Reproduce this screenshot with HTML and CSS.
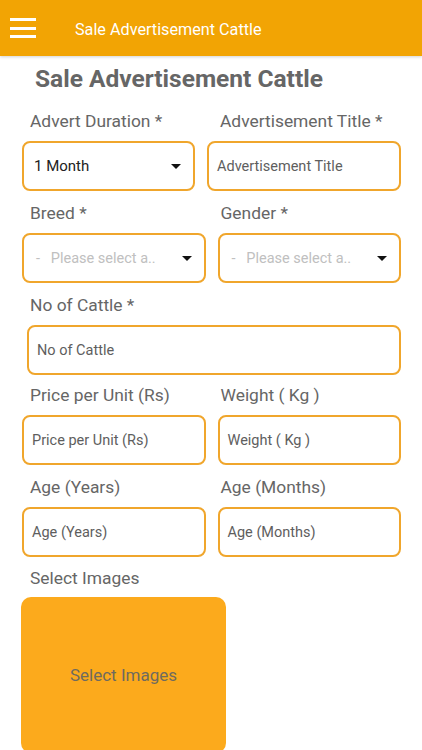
FILE: index.html
```html
<!DOCTYPE html>
<html>
<head>
<meta charset="utf-8">
<link rel="stylesheet" href="styles.css">
</head>
<body>
<header class="appbar">
  <span class="menu"><i></i><i></i><i></i></span>
  <span class="appbar-title">Sale Advertisement Cattle</span>
</header>
<main class="form">
  <h1 class="heading">Sale Advertisement Cattle</h1>

  <div class="row row-first">
    <div class="field">
      <label class="lbl">Advert Duration *</label>
      <div class="box select"><span class="value">1 Month</span><span class="caret"></span></div>
    </div>
    <div class="field">
      <label class="lbl lbl-r1">Advertisement Title *</label>
      <div class="box"><span class="ph">Advertisement Title</span></div>
    </div>
  </div>

  <div class="row">
    <div class="field">
      <label class="lbl">Breed *</label>
      <div class="box select"><span class="hint">-&nbsp;&nbsp; Please select a..</span><span class="caret"></span></div>
    </div>
    <div class="field">
      <label class="lbl lbl-r">Gender *</label>
      <div class="box select"><span class="hint">-&nbsp;&nbsp; Please select a..</span><span class="caret"></span></div>
    </div>
  </div>

  <div class="row row-full">
    <div class="field">
      <label class="lbl lbl-full">No of Cattle *</label>
      <div class="box"><span class="ph">No of Cattle</span></div>
    </div>
  </div>

  <div class="row">
    <div class="field">
      <label class="lbl">Price per Unit (Rs)</label>
      <div class="box"><span class="ph">Price per Unit (Rs)</span></div>
    </div>
    <div class="field">
      <label class="lbl lbl-r">Weight ( Kg )</label>
      <div class="box"><span class="ph">Weight ( Kg )</span></div>
    </div>
  </div>

  <div class="row">
    <div class="field">
      <label class="lbl">Age (Years)</label>
      <div class="box"><span class="ph">Age (Years)</span></div>
    </div>
    <div class="field">
      <label class="lbl lbl-r">Age (Months)</label>
      <div class="box"><span class="ph">Age (Months)</span></div>
    </div>
  </div>

  <div class="images">
    <label class="lbl">Select Images</label>
    <div class="picker">Select Images</div>
  </div>
</main>
</body>
</html>
```

FILE: styles.css
```css
* { box-sizing: border-box; }
html, body { margin: 0; padding: 0; background: #fff; }
body {
  font-family: Roboto, "Noto Sans", "Liberation Sans", sans-serif;
  width: 422px;
  height: 750px;
  overflow: hidden;
}
.appbar {
  height: 56px;
  background: #f2a404;
  display: flex;
  align-items: center;
  padding-left: 10px;
  box-shadow: 0 1px 3px rgba(0,0,0,0.18);
  position: relative;
}
.menu {
  width: 26px;
  height: 24px;
  display: flex;
  flex-direction: column;
  justify-content: space-between;
  padding: 2px 0;
}
.menu i {
  display: block;
  height: 3px;
  background: #fff;
}
.appbar-title {
  color: #fff;
  font-size: 16.2px;
  margin-left: 39px;
  margin-top: 2px;
}
.form {
  padding: 0 21px 0 22px;
}
.heading {
  margin: 9px 0 16px 13px;
  font-size: 24.5px;
  line-height: 28px;
  font-weight: 700;
  color: #666;
}
.row {
  display: grid;
  grid-template-columns: 1fr 1fr;
  column-gap: 12px;
  margin-bottom: 10px;
}
.row-first { grid-template-columns: 173px 1fr; }
.row-full { grid-template-columns: 1fr; padding-left: 5px; margin-bottom: 8px; }
.field { display: flex; flex-direction: column; }
.lbl {
  display: block;
  font-size: 17.4px;
  line-height: 24px;
  height: 24px;
  color: #666;
  padding-left: 8px;
  margin-bottom: 8px;
}
.lbl-r { padding-left: 3px; }
.lbl-r1 { padding-left: 13px; }
.lbl-full { padding-left: 3px; }
.box {
  height: 50px;
  border: 2px solid #f0a62c;
  border-radius: 8px;
  display: flex;
  align-items: center;
  padding: 0 8px;
  background: #fff;
}
.select { padding: 0 12px 0 10px; }
.value { font-size: 15px; color: #222; flex: 1; }
.ph { font-size: 14.5px; color: #5e5e5e; }
.hint { font-size: 14.5px; color: #c0c0c0; flex: 1; white-space: nowrap; padding-left: 2px; }
.caret {
  width: 0;
  height: 0;
  border-left: 5px solid transparent;
  border-right: 5px solid transparent;
  border-top: 5px solid #111;
}
.images { margin-top: -1px; }
.images .lbl { margin-bottom: 7px; }
.picker {
  width: 205px;
  height: 156px;
  margin-left: -1px;
  background: #fcaa1c;
  border-radius: 10px;
  display: flex;
  align-items: center;
  justify-content: center;
  font-size: 17px;
  color: #6f6a5f;
}
```
